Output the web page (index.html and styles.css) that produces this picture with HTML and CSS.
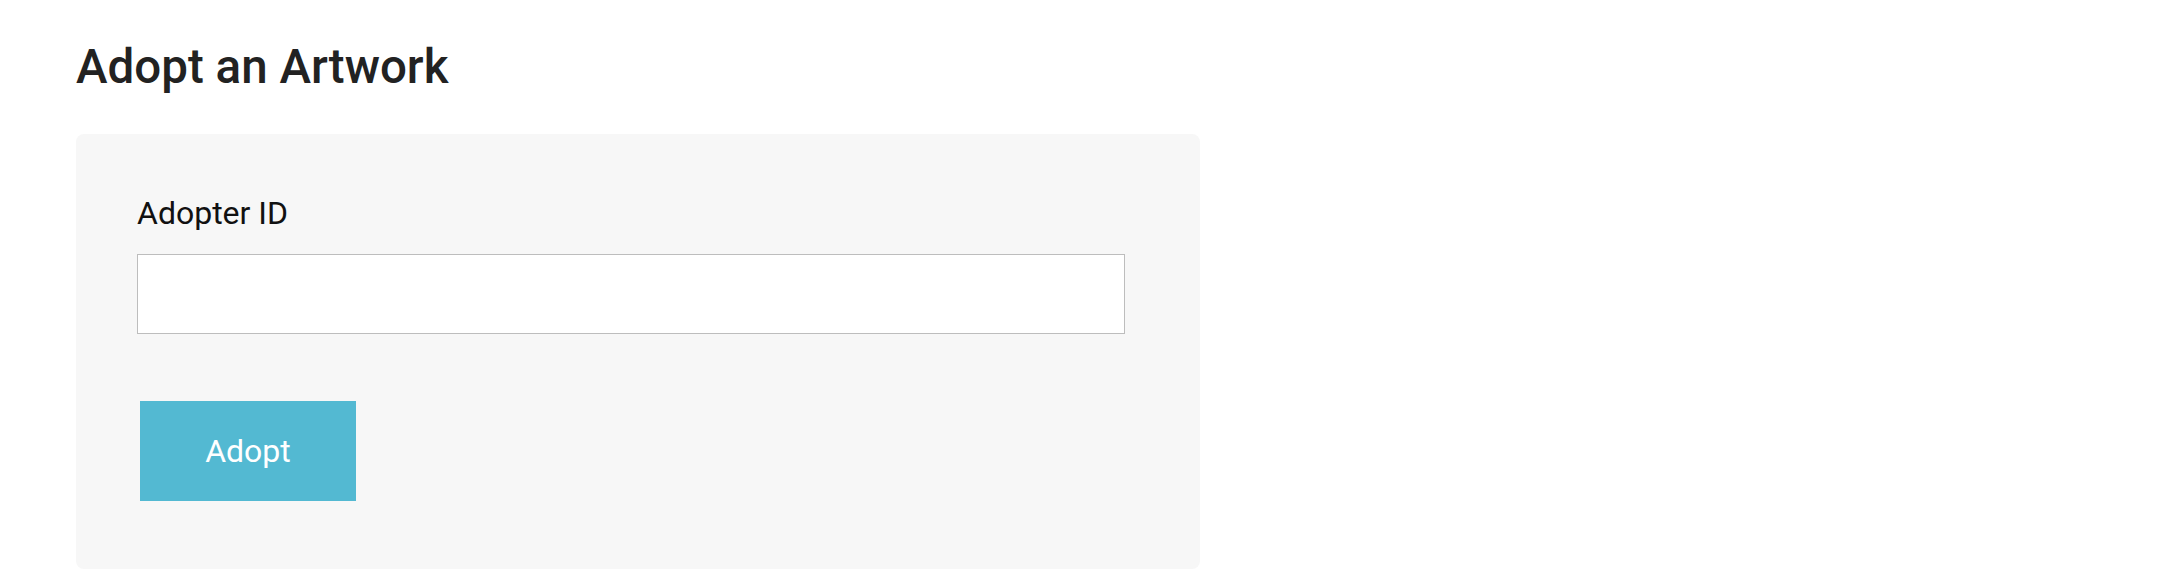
FILE: index.html
```html
<!DOCTYPE html>
<html>
<head>
<meta charset="utf-8">
<link rel="stylesheet" href="styles.css">
</head>
<body>
<main class="page">
  <h1 class="title">Adopt an Artwork</h1>
  <form class="card">
    <label class="label" for="adopter">Adopter ID</label>
    <input class="input" id="adopter" type="text">
    <button class="btn" type="button">Adopt</button>
  </form>
</main>
</body>
</html>
```
FILE: styles.css
```css
html, body {
  margin: 0;
  padding: 0;
  background: #ffffff;
}
.page {
  padding: 0 0 0 76px;
  font-family: Roboto, "Liberation Sans", sans-serif;
}
.title {
  margin: 0;
  padding-top: 40px;
  height: 134px;
  box-sizing: border-box;
  font-size: 47.5px;
  line-height: 54px;
  font-weight: 500;
  color: #222222;
}
.card {
  width: 1124px;
  height: 435px;
  box-sizing: border-box;
  background: #f7f7f7;
  border-radius: 8px;
  padding: 59px 0 0 61px;
  display: flex;
  flex-direction: column;
  align-items: flex-start;
}
.label {
  font-size: 32px;
  line-height: 40px;
  color: #111111;
}
.input {
  margin-top: 21px;
  width: 988px;
  height: 80px;
  box-sizing: border-box;
  border: 1px solid #bdbdbd;
  background: #ffffff;
  outline: none;
  padding: 0 12px;
}
.btn {
  margin: 67px 0 0 3px;
  width: 216px;
  height: 100px;
  border: none;
  border-radius: 0;
  background: #53b9d2;
  color: #ffffff;
  font-family: Roboto, "Liberation Sans", sans-serif;
  font-size: 32px;
  padding: 0;
}
```
